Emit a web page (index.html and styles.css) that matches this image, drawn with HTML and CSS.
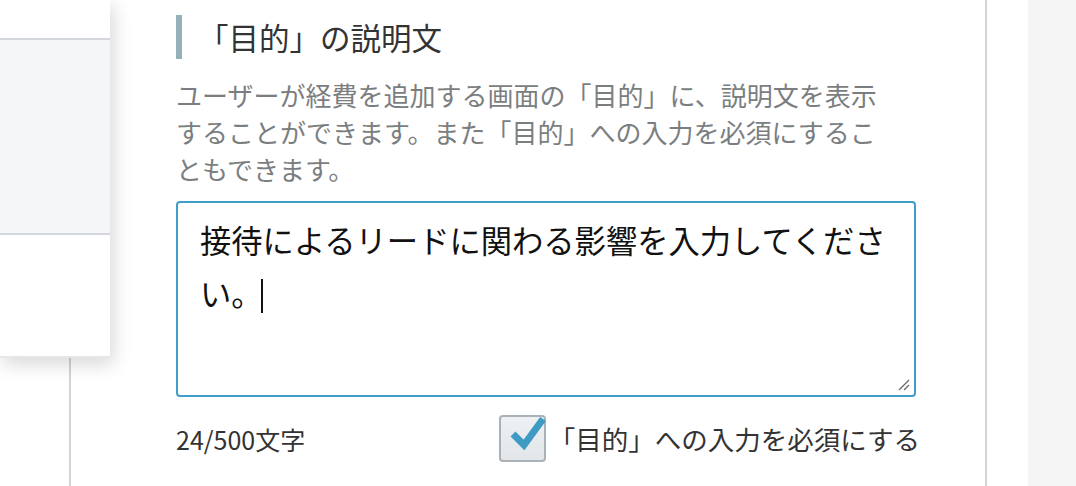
FILE: index.html
```html
<!DOCTYPE html>
<html lang="ja">
<head>
    <meta charset="UTF-8">
    <meta name="viewport" content="width=device-width, initial-scale=1.0">
    <title>目的の説明文</title>
    <link rel="stylesheet" href="styles.css">
</head>
<body>
    <div class="page">
        <!-- Floating list panel -->
        <div class="side-panel">
            <div class="side-row"></div>
            <div class="side-row active"></div>
            <div class="side-row last"></div>
        </div>

        <div class="main">
            <div class="section">
                <h2 class="section-title">「目的」の説明文</h2>
                <p class="section-desc">ユーザーが経費を追加する画面の「目的」に、説明文を表示することができます。また「目的」への入力を必須にすることもできます。</p>

                <div class="textbox">
                    <div class="textbox-text">接待によるリードに関わる影響を入力してください。<span class="caret"></span></div>
                    <svg class="grip" width="12" height="12" viewBox="0 0 12 12">
                        <line x1="1" y1="11" x2="11" y2="1" stroke="#666" stroke-width="1.3"/>
                        <line x1="6" y1="11" x2="11" y2="6" stroke="#666" stroke-width="1.3"/>
                    </svg>
                </div>

                <div class="section-footer">
                    <span class="counter">24/500文字</span>
                    <label class="check">
                        <span class="check-box">
                            <svg class="check-mark" width="40" height="36" viewBox="0 0 40 36">
                                <polyline points="6,20 17,31 36,5" fill="none" stroke="#3f9ac4" stroke-width="7" stroke-linejoin="miter" stroke-linecap="butt"/>
                            </svg>
                        </span>
                        「目的」への入力を必須にする
                    </label>
                </div>
            </div>
        </div>

        <div class="gap"></div>
        <div class="sidebar"></div>
    </div>
</body>
</html>
```

FILE: styles.css
```css
html, body {
    margin: 0;
    height: 100%;
}

body {
    font-family: "Noto Sans CJK JP", "Noto Sans", sans-serif;
    background: #fff;
    color: #333;
    overflow: hidden;
}

.page {
    position: relative;
    display: flex;
    height: 100%;
    padding-left: 69px;
}

/* overlay panel on the left */
.side-panel {
    position: absolute;
    left: 0;
    top: 0;
    width: 110px;
    display: flex;
    flex-direction: column;
    background: #fff;
    box-shadow: 3px 6px 18px rgba(0, 0, 0, 0.16);
    z-index: 2;
}

.side-row {
    height: 38px;
    border-bottom: 2px solid #d3d7db;
}

.side-row.active {
    height: 193px;
    background: #f5f6f8;
}

.side-row.last {
    height: 121px;
    border-bottom: 2px solid #e4e6e8;
}

.main {
    width: 914px;
    border-left: 2px solid #cfd4d7;
    border-right: 2px solid #cfd4d7;
    background: #fff;
}

.gap {
    width: 41px;
}

.sidebar {
    flex: 1;
    background: #f5f5f5;
}

.section {
    padding: 15px 0 0 105px;
    width: 740px;
}

.section-title {
    margin: 0;
    padding-left: 16px;
    border-left: 6px solid #95afbb;
    font-size: 30.5px;
    font-weight: normal;
    line-height: 44px;
    color: #333;
}

.section-desc {
    margin: 0;
    padding-top: 17px;
    font-size: 26px;
    line-height: 37px;
    color: #7b7e80;
    width: 720px;
}

.textbox {
    position: relative;
    margin-top: 14px;
    height: 192px;
    border: 2px solid #419ec9;
    border-radius: 4px;
    padding: 0 20px 0 22px;
}

.textbox-text {
    padding-top: 10px;
    font-size: 31.3px;
    line-height: 53px;
    color: #111;
}

.caret {
    display: inline-block;
    width: 2px;
    height: 34px;
    margin-left: -2px;
    background: #111;
    vertical-align: -7px;
}

.grip {
    position: absolute;
    right: 4px;
    bottom: 4px;
}

.section-footer {
    display: flex;
    align-items: center;
    justify-content: space-between;
    margin-top: 18px;
    margin-right: -4px;
}

.counter {
    font-size: 25px;
    color: #333;
}

.check {
    display: flex;
    align-items: center;
    gap: 3px;
    font-size: 26.5px;
    color: #333;
}

.check-box {
    position: relative;
    width: 43px;
    height: 43px;
    border: 2px solid #a8b2b8;
    border-radius: 4px;
    background: linear-gradient(#eef1f3, #e2e6e9);
}

.check-mark {
    position: absolute;
    left: 6px;
    top: -3px;
}
```
